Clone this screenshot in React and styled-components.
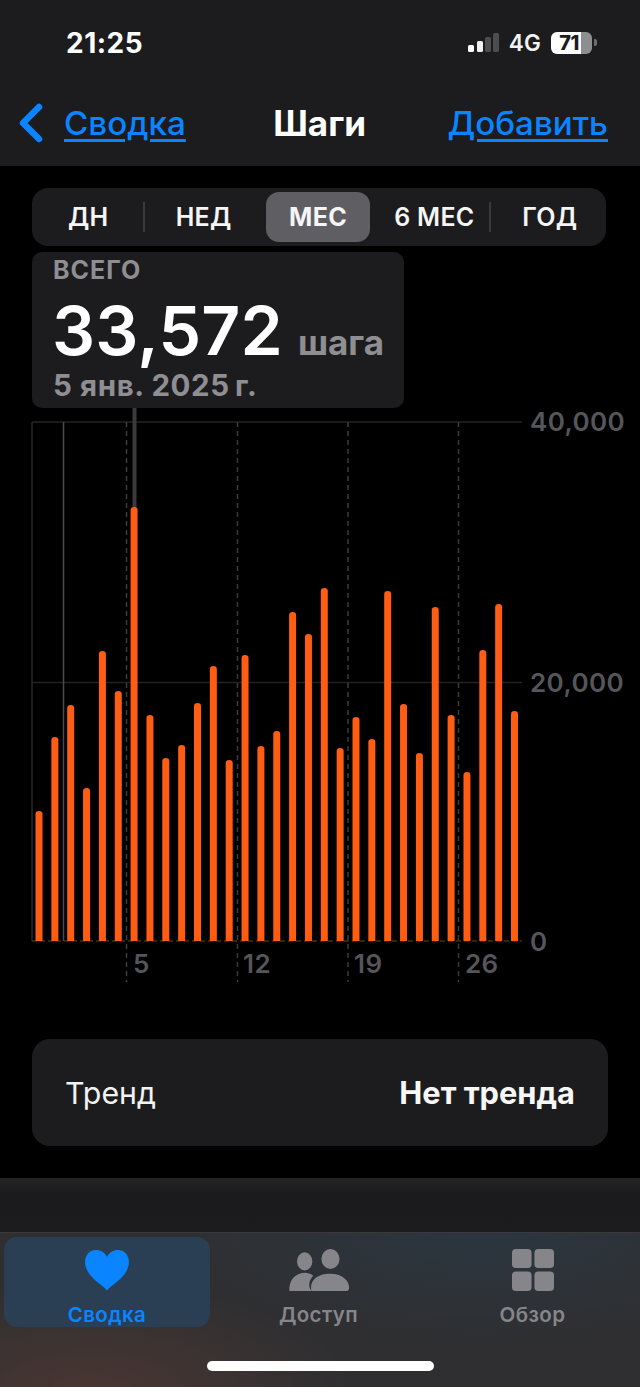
import React from "react";
import styled, { createGlobalStyle } from "styled-components";

const Global = createGlobalStyle`
  html, body { margin: 0; padding: 0; background: #000; }
  * { box-sizing: border-box; }
  body { font-family: Inter, "Noto Sans", "Liberation Sans", sans-serif; }
`;

const Screen = styled.div`
  width: 640px; height: 1387px; background: #000; display: flex; flex-direction: column; overflow: hidden;
`;
const Header = styled.header`
  height: 166px; background: #1c1c1e; display: flex; flex-direction: column;
`;
const StatusBar = styled.div`
  height: 85px; display: flex; align-items: center; justify-content: space-between; padding: 0 43px 0 66px;
`;
const Clock = styled.div`
  color: #fff; font-size: 28px; font-weight: 700; letter-spacing: 0.5px;
`;
const StatusRight = styled.div`
  display: flex; align-items: center;
`;
const NetLabel = styled.span`
  color: #f2f2f2; font-size: 22.5px; font-weight: 600; margin: 0 10px 0 9px; letter-spacing: 0.2px;
`;
const Battery = styled.div`
  width: 41px; height: 22px; border-radius: 6px; overflow: hidden;
  background: linear-gradient(90deg, #fff 0 74%, #8e8e90 74% 100%);
  color: #1c1c1e; font-size: 20px; font-weight: 800; text-align: center; line-height: 22px;
  letter-spacing: -0.5px; padding-right: 5px;
`;
const BatteryTip = styled.div`
  width: 3px; height: 7px; background: #6d6d70; border-radius: 0 2px 2px 0; margin-left: 2px;
`;
const NavBar = styled.nav`
  flex: 1; display: flex; align-items: flex-start; padding: 17px 32px 0 18px; justify-content: space-between;
`;
const BackGroup = styled.div`
  display: flex; align-items: center; gap: 20px;
`;
const NavLink = styled.a`
  color: #0a84ff; font-size: 33.2px; font-weight: 500; line-height: 42px;
  text-decoration: underline; text-underline-offset: 4px; text-decoration-thickness: 2.5px;
`;
const NavTitle = styled.div`
  color: #fff; font-size: 35px; font-weight: 700; line-height: 42px; margin-left: 6px;
`;
const Segments = styled.div`
  margin: 22px 0 0 32px; width: 574px; height: 58px; background: #1c1c1e; border-radius: 16px;
  display: grid; grid-template-columns: repeat(5, 115.4px); justify-content: center; align-items: center;
`;
const Segment = styled.div`
  position: relative; height: 50px; display: flex; align-items: center; justify-content: center;
  color: #f5f5f5; font-size: 25px; font-weight: ${p => (p.$active ? 700 : 600)}; letter-spacing: 0.3px;
  ${p => p.$active && "background: #5f5f63; border-radius: 13px; margin: 0 6.7px 0 4.7px;"}
  ${p => p.$divider && `
    &::after { content: ""; position: absolute; right: 1px; top: 10px; height: 30px; width: 2px; background: #3a3a3c; }
  `}
`;
const Tooltip = styled.div`
  margin: 6px 0 0 32px; width: 372px; height: 156px; background: #1c1c1e; border-radius: 10px;
  padding: 4px 0 0 21px; display: flex; flex-direction: column;
`;
const TipLabel = styled.div`
  color: #8e8e93; font-size: 25px; font-weight: 700; line-height: 28px; letter-spacing: 1px;
`;
const TipValueRow = styled.div`
  display: flex; align-items: baseline; gap: 15px; line-height: 72px; height: 72px; margin-top: 10px;
`;
const TipValue = styled.span`
  color: #fff; font-size: 67.8px; font-weight: 600; letter-spacing: 0.2px; margin-left: -1px;
`;
const TipUnit = styled.span`
  color: #8e8e93; font-size: 35px; font-weight: 700;
`;
const TipDate = styled.div`
  color: #8e8e93; font-size: 29.5px; font-weight: 700; line-height: 34px; margin-top: 2px; letter-spacing: 0.6px;
`;
const Chart = styled.div`
  position: relative; height: 620px; flex: none; margin-top: 12px;
`;
const ChartSvg = styled.svg`
  display: block; position: absolute; left: 0; top: 0; overflow: visible;
`;
const AxisLabel = styled.span`
  position: absolute; left: ${p => p.$x}px; top: ${p => p.$y}px;
  color: #55555a; font-size: 26px; font-weight: 600; line-height: 30px;
  letter-spacing: 0.4px; white-space: nowrap;
`;
const TrendCard = styled.div`
  margin: -1px 0 0 32px; width: 576px; height: 107px; background: #1c1c1e; border-radius: 18px;
  display: flex; align-items: center; justify-content: space-between; padding: 0 33px;
`;
const TrendLabel = styled.span`
  color: #f2f2f2; font-size: 30.3px; font-weight: 400;
`;
const TrendValue = styled.span`
  color: #f7f7f7; font-size: 30.8px; font-weight: 700;
`;
const Spacer = styled.div`
  margin-top: 32px; height: 54px; background: linear-gradient(180deg, #252527 0, #1b1b1d 30%, #1c1c1e 100%);
`;
const TabBar = styled.footer`
  position: relative; flex: 1; border-top: 1px solid #3a3a3c;
  background:
    radial-gradient(260px 110px at 90px 160px, #4a3632 0, rgba(74,54,50,0) 100%),
    radial-gradient(320px 110px at 480px 0, #2b3640 0, rgba(43,54,64,0) 100%),
    #2f2f31;
  display: grid; grid-template-columns: 206px 213px 211px; column-gap: 2px; padding: 4px 0 0 4px; align-items: start;
`;
const Tab = styled.div`
  height: 90px; border-radius: 13px; display: flex; flex-direction: column; align-items: center;
  padding-top: 12px; background: ${p => (p.$active ? "#2b3f54" : "transparent")};
  color: ${p => (p.$active ? "#0a84ff" : "#86868a")};
`;
const TabIcon = styled.svg`
  display: block; height: 44px;
`;
const TabLabel = styled.span`
  margin-top: 12px; font-size: 20.5px; font-weight: 600; line-height: 24px; letter-spacing: 0.4px;
`;
const HomeIndicator = styled.div`
  position: absolute; left: 207px; top: 128px; width: 227px; height: 10px; border-radius: 5px; background: #fff;
`;

const bars = [811,737,705,788,651,691,507,715,758,745,703,666,760,655,746,731,612,634,588,748,717,739,591,704,753,607,715,772,650,604,711];
const BASE = 521;
const OFF = 420;
const tabs = ["ДН", "НЕД", "МЕС", "6 МЕС", "ГОД"];

export default function App() {
  return (
    <Screen>
      <Global />
      <Header>
        <StatusBar>
          <Clock>21:25</Clock>
          <StatusRight>
            <svg width="32" height="20" viewBox="0 0 32 20">
              <rect x="0" y="12" width="6" height="7" rx="1.5" fill="#fff" />
              <rect x="9" y="8" width="6" height="11" rx="1.5" fill="#f0f0f0" />
              <rect x="17" y="4" width="6" height="15" rx="1.5" fill="#4d4d50" />
              <rect x="25" y="0" width="6" height="19" rx="1.5" fill="#4d4d50" />
            </svg>
            <NetLabel>4G</NetLabel>
            <Battery>71</Battery>
            <BatteryTip />
          </StatusRight>
        </StatusBar>
        <NavBar>
          <BackGroup>
            <svg width="26" height="40" viewBox="0 0 26 40">
              <path d="M21 4 L5 20 L21 36" fill="none" stroke="#0a84ff" strokeWidth="6.5" strokeLinecap="round" strokeLinejoin="round" />
            </svg>
            <NavLink>Сводка</NavLink>
          </BackGroup>
          <NavTitle>Шаги</NavTitle>
          <NavLink>Добавить</NavLink>
        </NavBar>
      </Header>

      <Segments>
        {tabs.map((t, i) => (
          <Segment key={t} $active={i === 2} $divider={i === 0 || i === 3}>{t}</Segment>
        ))}
      </Segments>

      <Tooltip>
        <TipLabel>ВСЕГО</TipLabel>
        <TipValueRow>
          <TipValue>33,572</TipValue>
          <TipUnit>шага</TipUnit>
        </TipValueRow>
        <TipDate>5 янв. 2025{"\u2009"}г.</TipDate>
      </Tooltip>

      <Chart>
        <ChartSvg width="640" height="620" viewBox="0 0 640 620">
          <g stroke="#232325" strokeWidth="1.5">
            <line x1="32" y1="2" x2="522" y2="2" />
            <line x1="32" y1="262.5" x2="522" y2="262.5" />
          </g>
          <line x1="32" y1={BASE} x2="522" y2={BASE} stroke="#333335" strokeWidth="1.5" strokeDasharray="5 3" />
          <line x1="32" y1="2" x2="32" y2={BASE} stroke="#2a2a2c" strokeWidth="1.5" />
          <line x1="63.5" y1="2" x2="63.5" y2={BASE} stroke="#4a4a4c" strokeWidth="1.5" />
          {[126.5, 237.5, 348, 458.5].map(x => (
            <line key={x} x1={x} y1="2" x2={x} y2="562" stroke="#3c3c3e" strokeWidth="1.5" strokeDasharray="5 4" />
          ))}
          <rect x="132.5" y="-12" width="4" height="100" fill="#3a3a3c" />
          {bars.map((top, i) => {
            const x = 39 + i * 15.85;
            const y = top - OFF;
            return <path key={i} d={`M${x - 3.5} ${BASE} V${y + 3} a3.5 3 0 0 1 7 0 V${BASE} Z`} fill="#ff5c14" />;
          })}
        </ChartSvg>
        <AxisLabel $x={530} $y={-13}>40,000</AxisLabel>
        <AxisLabel $x={530} $y={248}>20,000</AxisLabel>
        <AxisLabel $x={530} $y={507}>0</AxisLabel>
        <AxisLabel $x={133} $y={529}>5</AxisLabel>
        <AxisLabel $x={243} $y={529}>12</AxisLabel>
        <AxisLabel $x={354} $y={529}>19</AxisLabel>
        <AxisLabel $x={465} $y={529}>26</AxisLabel>
      </Chart>

      <TrendCard>
        <TrendLabel>Тренд</TrendLabel>
        <TrendValue>Нет тренда</TrendValue>
      </TrendCard>

      <Spacer />

      <TabBar>
        <Tab $active>
          <TabIcon viewBox="0 0 48 44" width="48">
            <path d="M24 43.5 C19 37 1.5 29 1 14 C1 6 6 1 12.5 1 C17.5 1 21.5 3.5 24 8 C26.5 3.5 30.5 1 35.5 1 C42 1 47 6 47 14 C46.5 29 29 37 24 43.5 Z" fill="currentColor" />
          </TabIcon>
          <TabLabel>Сводка</TabLabel>
        </Tab>
        <Tab>
          <TabIcon viewBox="0 0 64 44" width="64">
            <ellipse cx="17" cy="13" rx="8" ry="9.5" fill="currentColor" />
            <ellipse cx="44" cy="10.5" rx="9.5" ry="10.5" fill="currentColor" />
            <path d="M24 44 H1 C0 35 6 25 17 25 C20 25 23 26 26 28 C22 32 20 38 24 44 Z" fill="currentColor" />
            <path d="M24 44 C22 32 31 26 44 26 C57 26 64 34 63.5 41 C63.5 43 62 44 60 44 Z" fill="currentColor" />
          </TabIcon>
          <TabLabel>Доступ</TabLabel>
        </Tab>
        <Tab>
          <TabIcon viewBox="0 0 44 44" width="44">
            <rect x="0" y="0" width="20.5" height="20" rx="4" fill="currentColor" />
            <rect x="23.5" y="0" width="20.5" height="20" rx="4" fill="currentColor" />
            <rect x="0" y="23.5" width="20.5" height="20.5" rx="4" fill="currentColor" />
            <rect x="23.5" y="23.5" width="20.5" height="20.5" rx="4" fill="currentColor" />
          </TabIcon>
          <TabLabel>Обзор</TabLabel>
        </Tab>
        <HomeIndicator />
      </TabBar>
    </Screen>
  );
}
